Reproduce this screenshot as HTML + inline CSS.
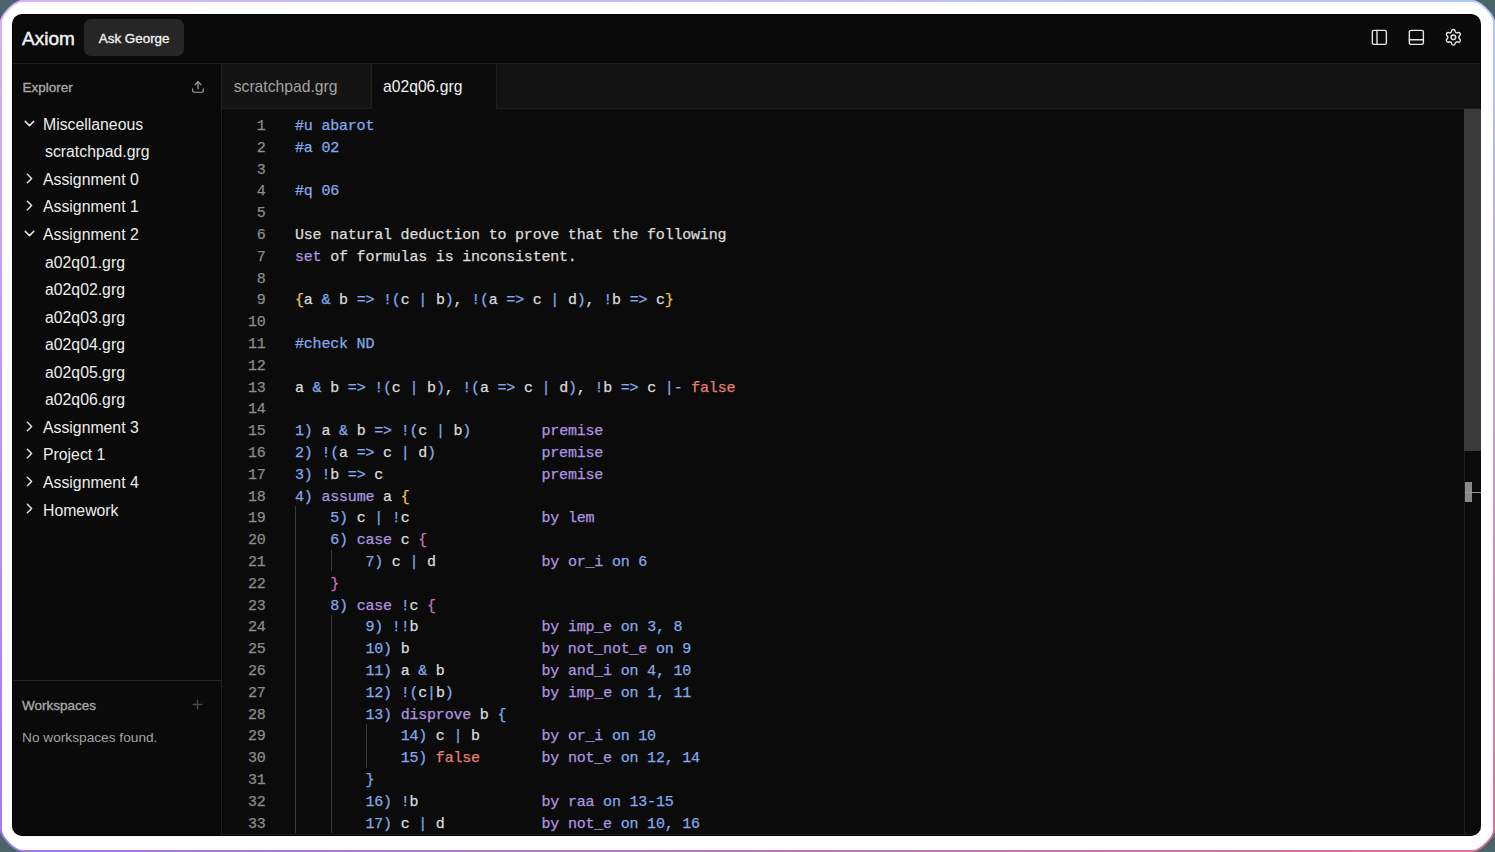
<!DOCTYPE html>
<html><head><meta charset="utf-8"><style>
*{box-sizing:border-box;margin:0;padding:0}
html,body{width:1495px;height:852px;overflow:hidden;background:#4b646a;font-family:"Liberation Sans",sans-serif}
.outer{position:absolute;left:0;top:0;width:1495px;height:852px;overflow:hidden;clip-path:path('M22,0 L1473,0 C1480.48,0 1495,14.519999999999998 1495,22 L1495,830 C1495,837.48 1480.48,852 1473,852 L22,852 C14.519999999999998,852 0,837.48 0,830 L0,22 C0,14.519999999999998 14.519999999999998,0 22,0 Z');background:linear-gradient(to right,#a078ee,#e2709a)}
.outer .tophalf{position:absolute;left:0;top:0;width:100%;height:100%;background:linear-gradient(to right,#d4b4fa,#b0c8fe);-webkit-mask-image:linear-gradient(to bottom,#000,transparent)}
.white{position:absolute;left:2px;top:2px;right:2px;bottom:2px;background:#fff;clip-path:path('M20,0 L1471,0 C1477.8,0 1491,13.2 1491,20 L1491,828 C1491,834.8 1477.8,848 1471,848 L20,848 C13.2,848 0,834.8 0,828 L0,20 C0,13.2 13.2,0 20,0 Z')}
.panel{position:absolute;left:12px;top:14px;width:1469px;height:822px;border:1px solid #000;border-right:0;border-radius:10px;background:#0b0b0b;overflow:hidden}
.abs{position:absolute;white-space:pre}
.hdr{position:absolute;left:0;top:0;width:1467px;height:49px;background:#0a0a0a;border-bottom:1px solid #1f1f1f}
.side{position:absolute;left:0;top:49px;width:209px;height:771px;background:#0a0a0a;border-right:1px solid #1f1f1f}
.logo{font-weight:400;color:#f2f2f2;line-height:1;-webkit-text-stroke:0.45px #f2f2f2}
.btn{width:100px;height:36.5px;background:#262626;border-radius:7px}
.btnt{font-weight:400;color:#f0f0f0;line-height:1;-webkit-text-stroke:0.35px #f0f0f0}
svg{fill:none;stroke-linecap:round;stroke-linejoin:round}
.ico{stroke:#e6e6e6;stroke-width:1.8}
.ico2{stroke:#a6a6a6;stroke-width:2}
.ico3{stroke:#474747;stroke-width:2.2}
.chev{stroke:#e6e6e6;stroke-width:2}
.sechd{font-weight:400;color:#a8a8a8;line-height:1;-webkit-text-stroke:0.35px #a8a8a8}
.tr{font-size:15.8px;color:#ededed;line-height:1}
.nows{color:#a3a3a3;line-height:1}
.tab1{color:#a3a3a3;line-height:1}
.tab2{color:#f2f2f2;line-height:1}
.nums,.code{font-family:"Liberation Mono",monospace;font-size:15px;line-height:21.8px;letter-spacing:-0.2px;-webkit-text-stroke:0.25px currentColor}
.nums{width:43.5px;text-align:right;color:#8c8c8c}
.code{white-space:pre;color:#dcdcdc}
.ln{height:21.8px}
.b{color:#82aaeb}.w{color:#dcdcdc}.p{color:#b094e0}.g{color:#eec24c}.k{color:#d070b8}.r{color:#e3806f}
.guide{position:absolute;width:1px;background:#3a3a3a}
</style></head><body>
<div class="outer"><div class="tophalf"></div></div>
<div class="white"></div>
<div class="panel">
<div class="hdr"></div>
<div class="side"></div>
<div class="abs logo" style="left:9px;top:14.22px;font-size:19.0px;">Axiom</div><div class="abs btn" style="left:71px;top:4px"></div><div class="abs btnt" style="left:85.8px;top:17.26px;font-size:13.4px;">Ask George</div><svg class="abs ico" style="left:1357.20px;top:12.70px" width="18.72" height="18.72" viewBox="0 0 24 24"><rect x="3" y="3" width="18" height="18" rx="2"/><path d="M9 3v18"/></svg><svg class="abs ico" style="left:1394.00px;top:12.70px" width="18.72" height="18.72" viewBox="0 0 24 24"><rect x="3" y="3" width="18" height="18" rx="2"/><path d="M3 15h18"/></svg><svg class="abs ico" style="left:1431.20px;top:12.80px" width="18.72" height="18.72" viewBox="0 0 24 24"><path d="M9.671 4.136a2.34 2.34 0 0 1 4.659 0 2.34 2.34 0 0 0 3.319 1.915 2.34 2.34 0 0 1 2.33 4.033 2.34 2.34 0 0 0 0 3.831 2.34 2.34 0 0 1-2.33 4.033 2.34 2.34 0 0 0-3.319 1.915 2.34 2.34 0 0 1-4.659 0 2.34 2.34 0 0 0-3.32-1.915 2.34 2.34 0 0 1-2.33-4.033 2.34 2.34 0 0 0 0-3.831A2.34 2.34 0 0 1 6.35 6.051a2.34 2.34 0 0 0 3.319-1.915"/><circle cx="12" cy="12" r="3"/></svg>
<div class="abs sechd" style="left:9.399999999999999px;top:65.87px;font-size:13.5px;">Explorer</div><svg class="abs ico2" style="left:178.00px;top:64.70px" width="14" height="14" viewBox="0 0 24 24"><path d="M21 15v4a2 2 0 0 1-2 2H5a2 2 0 0 1-2-2v-4"/><path d="m17 8-5-5-5 5"/><path d="M12 3v12"/></svg><svg class="abs chev" style="left:8px;top:99.70px" width="17" height="17" viewBox="0 0 24 24"><path d="m6 9 6 6 6-6"/></svg><div class="abs tr" style="left:30px;top:101.83px">Miscellaneous</div><div class="abs tr" style="left:32px;top:129.38px">scratchpad.grg</div><svg class="abs chev" style="left:8px;top:154.80px" width="17" height="17" viewBox="0 0 24 24"><path d="m9 18 6-6-6-6"/></svg><div class="abs tr" style="left:30px;top:156.93px">Assignment 0</div><svg class="abs chev" style="left:8px;top:182.35px" width="17" height="17" viewBox="0 0 24 24"><path d="m9 18 6-6-6-6"/></svg><div class="abs tr" style="left:30px;top:184.48px">Assignment 1</div><svg class="abs chev" style="left:8px;top:209.90px" width="17" height="17" viewBox="0 0 24 24"><path d="m6 9 6 6 6-6"/></svg><div class="abs tr" style="left:30px;top:212.03px">Assignment 2</div><div class="abs tr" style="left:32px;top:239.58px">a02q01.grg</div><div class="abs tr" style="left:32px;top:267.13px">a02q02.grg</div><div class="abs tr" style="left:32px;top:294.68px">a02q03.grg</div><div class="abs tr" style="left:32px;top:322.23px">a02q04.grg</div><div class="abs tr" style="left:32px;top:349.78px">a02q05.grg</div><div class="abs tr" style="left:32px;top:377.33px">a02q06.grg</div><svg class="abs chev" style="left:8px;top:402.75px" width="17" height="17" viewBox="0 0 24 24"><path d="m9 18 6-6-6-6"/></svg><div class="abs tr" style="left:30px;top:404.88px">Assignment 3</div><svg class="abs chev" style="left:8px;top:430.30px" width="17" height="17" viewBox="0 0 24 24"><path d="m9 18 6-6-6-6"/></svg><div class="abs tr" style="left:30px;top:432.43px">Project 1</div><svg class="abs chev" style="left:8px;top:457.85px" width="17" height="17" viewBox="0 0 24 24"><path d="m9 18 6-6-6-6"/></svg><div class="abs tr" style="left:30px;top:459.98px">Assignment 4</div><svg class="abs chev" style="left:8px;top:485.40px" width="17" height="17" viewBox="0 0 24 24"><path d="m9 18 6-6-6-6"/></svg><div class="abs tr" style="left:30px;top:487.53px">Homework</div><div class="abs" style="left:0px;top:665px;width:208px;height:1px;background:#242424"></div><div class="abs sechd" style="left:9px;top:684.17px;font-size:13.5px;">Workspaces</div><svg class="abs ico3" style="left:177.30px;top:681.50px" width="15" height="15" viewBox="0 0 24 24"><path d="M5 12h14"/><path d="M12 5v14"/></svg><div class="abs nows" style="left:9px;top:715.70px;font-size:13.7px;">No workspaces found.</div>
<div class="abs" style="left:209px;top:49px;width:1258px;height:45px;background:#131313;border-bottom:1px solid #1f1f1f"></div><div class="abs" style="left:209px;top:49px;width:150px;height:45px;background:#141414;border-right:1px solid #1f1f1f;border-bottom:1px solid #1f1f1f"></div><div class="abs" style="left:359px;top:49px;width:125px;height:45px;background:#0b0b0b;border-right:1px solid #1f1f1f"></div><div class="abs tab1" style="left:220.7px;top:64.01px;font-size:15.7px;">scratchpad.grg</div><div class="abs tab2" style="left:370px;top:64.01px;font-size:15.7px;">a02q06.grg</div>

<div class="abs nums" style="left:209px;top:101.00px"><div class="ln">1</div><div class="ln">2</div><div class="ln">3</div><div class="ln">4</div><div class="ln">5</div><div class="ln">6</div><div class="ln">7</div><div class="ln">8</div><div class="ln">9</div><div class="ln">10</div><div class="ln">11</div><div class="ln">12</div><div class="ln">13</div><div class="ln">14</div><div class="ln">15</div><div class="ln">16</div><div class="ln">17</div><div class="ln">18</div><div class="ln">19</div><div class="ln">20</div><div class="ln">21</div><div class="ln">22</div><div class="ln">23</div><div class="ln">24</div><div class="ln">25</div><div class="ln">26</div><div class="ln">27</div><div class="ln">28</div><div class="ln">29</div><div class="ln">30</div><div class="ln">31</div><div class="ln">32</div><div class="ln">33</div></div>
<div class="abs code" style="left:282px;top:101.00px"><div class="ln"><span class="b">#u abarot</span></div><div class="ln"><span class="b">#a 02</span></div><div class="ln"></div><div class="ln"><span class="b">#q 06</span></div><div class="ln"></div><div class="ln"><span class="w">Use natural deduction to prove that the following</span></div><div class="ln"><span class="p">set</span><span class="w"> of formulas is inconsistent.</span></div><div class="ln"></div><div class="ln"><span class="g">{</span><span class="w">a </span><span class="b">&amp;</span><span class="w"> b </span><span class="b">=&gt;</span><span class="w"> </span><span class="b">!(</span><span class="w">c </span><span class="b">|</span><span class="w"> b</span><span class="b">)</span><span class="w">, </span><span class="b">!(</span><span class="w">a </span><span class="b">=&gt;</span><span class="w"> c </span><span class="b">|</span><span class="w"> d</span><span class="b">)</span><span class="w">, </span><span class="b">!</span><span class="w">b </span><span class="b">=&gt;</span><span class="w"> c</span><span class="g">}</span></div><div class="ln"></div><div class="ln"><span class="b">#check ND</span></div><div class="ln"></div><div class="ln"><span class="w">a </span><span class="b">&amp;</span><span class="w"> b </span><span class="b">=&gt;</span><span class="w"> </span><span class="b">!(</span><span class="w">c </span><span class="b">|</span><span class="w"> b</span><span class="b">)</span><span class="w">, </span><span class="b">!(</span><span class="w">a </span><span class="b">=&gt;</span><span class="w"> c </span><span class="b">|</span><span class="w"> d</span><span class="b">)</span><span class="w">, </span><span class="b">!</span><span class="w">b </span><span class="b">=&gt;</span><span class="w"> c </span><span class="b">|-</span><span class="w"> </span><span class="r">false</span></div><div class="ln"></div><div class="ln"><span class="b">1)</span><span class="w"> a </span><span class="b">&amp;</span><span class="w"> b </span><span class="b">=&gt;</span><span class="w"> </span><span class="b">!(</span><span class="w">c </span><span class="b">|</span><span class="w"> b</span><span class="b">)</span><span class="w">        </span><span class="p">premise</span></div><div class="ln"><span class="b">2)</span><span class="w"> </span><span class="b">!(</span><span class="w">a </span><span class="b">=&gt;</span><span class="w"> c </span><span class="b">|</span><span class="w"> d</span><span class="b">)</span><span class="w">            </span><span class="p">premise</span></div><div class="ln"><span class="b">3)</span><span class="w"> </span><span class="b">!</span><span class="w">b </span><span class="b">=&gt;</span><span class="w"> c</span><span class="w">                  </span><span class="p">premise</span></div><div class="ln"><span class="b">4)</span><span class="w"> </span><span class="p">assume</span><span class="w"> a </span><span class="g">{</span></div><div class="ln"><span class="w">    </span><span class="b">5)</span><span class="w"> c </span><span class="b">|</span><span class="w"> </span><span class="b">!</span><span class="w">c</span><span class="w">               </span><span class="p">by lem</span></div><div class="ln"><span class="w">    </span><span class="b">6)</span><span class="w"> </span><span class="p">case</span><span class="w"> c </span><span class="k">{</span></div><div class="ln"><span class="w">        </span><span class="b">7)</span><span class="w"> c </span><span class="b">|</span><span class="w"> d</span><span class="w">            </span><span class="p">by or_i</span><span class="b"> on 6</span></div><div class="ln"><span class="w">    </span><span class="k">}</span></div><div class="ln"><span class="w">    </span><span class="b">8)</span><span class="w"> </span><span class="p">case</span><span class="w"> </span><span class="b">!</span><span class="w">c </span><span class="k">{</span></div><div class="ln"><span class="w">        </span><span class="b">9)</span><span class="w"> </span><span class="b">!!</span><span class="w">b</span><span class="w">              </span><span class="p">by imp_e</span><span class="b"> on 3, 8</span></div><div class="ln"><span class="w">        </span><span class="b">10)</span><span class="w"> b</span><span class="w">               </span><span class="p">by not_not_e</span><span class="b"> on 9</span></div><div class="ln"><span class="w">        </span><span class="b">11)</span><span class="w"> a </span><span class="b">&amp;</span><span class="w"> b</span><span class="w">           </span><span class="p">by and_i</span><span class="b"> on 4, 10</span></div><div class="ln"><span class="w">        </span><span class="b">12)</span><span class="w"> </span><span class="b">!(</span><span class="w">c</span><span class="b">|</span><span class="w">b</span><span class="b">)</span><span class="w">          </span><span class="p">by imp_e</span><span class="b"> on 1, 11</span></div><div class="ln"><span class="w">        </span><span class="b">13)</span><span class="w"> </span><span class="p">disprove</span><span class="w"> b </span><span class="b">{</span></div><div class="ln"><span class="w">            </span><span class="b">14)</span><span class="w"> c </span><span class="b">|</span><span class="w"> b</span><span class="w">       </span><span class="p">by or_i</span><span class="b"> on 10</span></div><div class="ln"><span class="w">            </span><span class="b">15)</span><span class="w"> </span><span class="r">false</span><span class="w">       </span><span class="p">by not_e</span><span class="b"> on 12, 14</span></div><div class="ln"><span class="w">        </span><span class="b">}</span></div><div class="ln"><span class="w">        </span><span class="b">16)</span><span class="w"> </span><span class="b">!</span><span class="w">b</span><span class="w">              </span><span class="p">by raa</span><span class="b"> on 13-15</span></div><div class="ln"><span class="w">        </span><span class="b">17)</span><span class="w"> c </span><span class="b">|</span><span class="w"> d</span><span class="w">           </span><span class="p">by not_e</span><span class="b"> on 10, 16</span></div></div>
<div class="guide" style="left:282px;top:491.10px;height:327.00px"></div><div class="guide" style="left:318px;top:534.70px;height:21.80px"></div><div class="guide" style="left:318px;top:600.10px;height:218.00px"></div><div class="guide" style="left:353px;top:709.10px;height:43.60px"></div>

<div class="abs" style="left:1451px;top:94px;width:17px;height:726px;border-left:1px solid #1f1f1f"></div><div class="abs" style="left:1451px;top:94px;width:17px;height:342px;background:#3a3a3a"></div><div class="abs" style="left:1452px;top:467px;width:7px;height:20px;background:#8a8a8a"></div><div class="abs" style="left:1452px;top:476.5px;width:16px;height:1.5px;background:#9c9c9c"></div>
<div class="abs" style="left:208px;top:819px;width:1260px;height:1px;background:#1e1e1e"></div>
</div>
</body></html>
